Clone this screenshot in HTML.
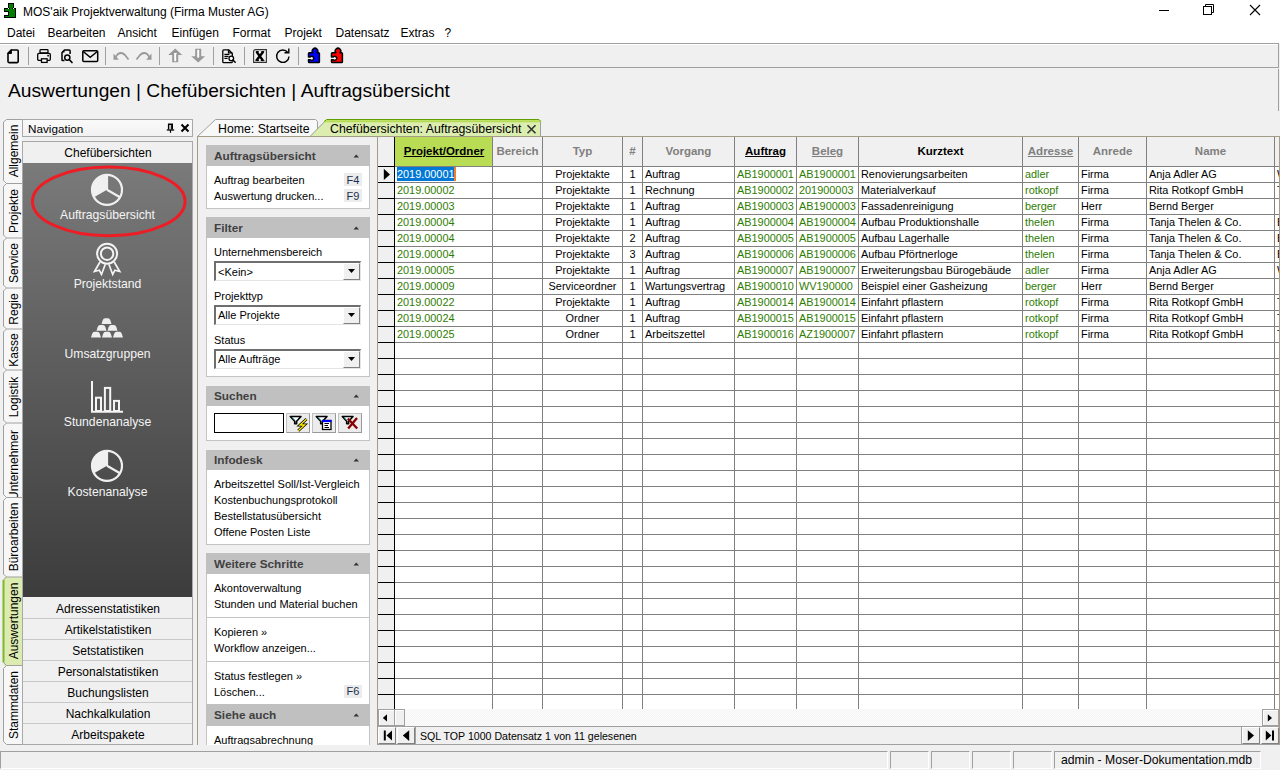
<!DOCTYPE html><html><head><meta charset='utf-8'><style>
html,body{margin:0;padding:0}
body{width:1280px;height:770px;position:relative;overflow:hidden;background:#f0f0f0;font-family:'Liberation Sans', sans-serif;}
div{box-sizing:border-box}
svg{position:absolute;overflow:visible}
</style></head><body><div style='position:absolute;left:0px;top:0px;width:1280px;height:43px;background:#fff'></div><div style='position:absolute;left:23px;top:12px;height:0;line-height:0;font-size:12px;color:#000;font-weight:normal;white-space:nowrap;'>MOS'aik Projektverwaltung (Firma Muster AG)</div><div style='position:absolute;left:1159px;top:10px;width:10px;height:1px;background:#000'></div><svg style='left:1203px;top:4px' width='12' height='12'><path d='M2.5 2.5V0.5H10.5V8.5H8.5' fill='none' stroke='#000'/><rect x='0.5' y='2.5' width='8' height='8' fill='none' stroke='#000'/></svg><svg style='left:1249px;top:4px' width='12' height='12'><path d='M1 1L11 11M11 1L1 11' stroke='#000' stroke-width='1.1'/></svg><svg style='left:0;top:0' width='20' height='20' shape-rendering='crispEdges'><rect x='4' y='8' width='12' height='10' fill='#000'/><rect x='8' y='3' width='6' height='5' fill='#000'/><rect x='9' y='2.6' width='4' height='1' fill='#000'/><rect x='5' y='9' width='10' height='8' fill='#008000'/><rect x='9' y='4' width='4' height='4' fill='#008000'/><rect x='10' y='7' width='2' height='2' fill='#008000'/><rect x='8' y='8' width='1' height='1' fill='#f0f0f0'/><rect x='13' y='8' width='1' height='1' fill='#f0f0f0'/><rect x='4' y='12' width='5' height='3' fill='#000'/><rect x='4' y='12' width='4' height='2.4' fill='#fff'/><rect x='4' y='11' width='5' height='1' fill='#000'/><rect x='4' y='15' width='5' height='1' fill='#000'/><rect x='8' y='11' width='1' height='5' fill='#000'/><rect x='5' y='12' width='3' height='3' fill='#fff'/><rect x='4' y='12.2' width='1' height='2.6' fill='#fff'/></svg><div style='position:absolute;left:7.0px;top:33px;height:0;line-height:0;font-size:12px;color:#000;font-weight:normal;white-space:nowrap;'>Datei</div><div style='position:absolute;left:47.5px;top:33px;height:0;line-height:0;font-size:12px;color:#000;font-weight:normal;white-space:nowrap;'>Bearbeiten</div><div style='position:absolute;left:117.5px;top:33px;height:0;line-height:0;font-size:12px;color:#000;font-weight:normal;white-space:nowrap;'>Ansicht</div><div style='position:absolute;left:171.5px;top:33px;height:0;line-height:0;font-size:12px;color:#000;font-weight:normal;white-space:nowrap;'>Einfügen</div><div style='position:absolute;left:232.5px;top:33px;height:0;line-height:0;font-size:12px;color:#000;font-weight:normal;white-space:nowrap;'>Format</div><div style='position:absolute;left:284.5px;top:33px;height:0;line-height:0;font-size:12px;color:#000;font-weight:normal;white-space:nowrap;'>Projekt</div><div style='position:absolute;left:335.5px;top:33px;height:0;line-height:0;font-size:12px;color:#000;font-weight:normal;white-space:nowrap;'>Datensatz</div><div style='position:absolute;left:400.5px;top:33px;height:0;line-height:0;font-size:12px;color:#000;font-weight:normal;white-space:nowrap;'>Extras</div><div style='position:absolute;left:444.5px;top:33px;height:0;line-height:0;font-size:12px;color:#000;font-weight:normal;white-space:nowrap;'>?</div><div style='position:absolute;left:0px;top:43px;width:1279px;height:25px;border:1px solid #a0a0a0;border-left:none;background:#f0f0f0'></div><div style='position:absolute;left:28px;top:47px;width:1px;height:18px;background:#a0a0a0'></div><div style='position:absolute;left:105px;top:47px;width:1px;height:18px;background:#a0a0a0'></div><div style='position:absolute;left:159px;top:47px;width:1px;height:18px;background:#a0a0a0'></div><div style='position:absolute;left:213px;top:47px;width:1px;height:18px;background:#a0a0a0'></div><div style='position:absolute;left:244px;top:47px;width:1px;height:18px;background:#a0a0a0'></div><div style='position:absolute;left:298px;top:47px;width:1px;height:18px;background:#a0a0a0'></div><div style='position:absolute;left:0px;top:44px;width:1278px;height:1px;background:#fff'></div><svg style='left:7px;top:49px' width='13' height='15'><path d='M1 4.3L4.3 1H10.2Q11.2 1 11.2 2V12.6Q11.2 13.6 10.2 13.6H2Q1 13.6 1 12.6Z' fill='none' stroke='#000' stroke-width='1.6' stroke-linejoin='round'/><path d='M1 4.3L4.3 1V4.3Z' fill='#000' stroke='#000' stroke-width='1.2' stroke-linejoin='round'/></svg><svg style='left:37px;top:49px' width='15' height='15'><rect x='3' y='0.7' width='8' height='3.2' rx='0.7' fill='none' stroke='#000' stroke-width='1.3'/><rect x='0.7' y='4.4' width='12.6' height='6.9' rx='1.1' fill='#f0f0f0' stroke='#000' stroke-width='1.3'/><rect x='4.5' y='9.8' width='5.6' height='3.6' fill='#fff' stroke='#000' stroke-width='1.3'/><circle cx='11.1' cy='6.7' r='0.9' fill='#000'/></svg><svg style='left:61px;top:49px' width='13' height='15'><path d='M3.5 11.5H1.8Q1 11.5 1 10.7V3.5L3.5 1H8.3Q9.1 1 9.1 1.8V5' fill='none' stroke='#000' stroke-width='1.5' stroke-linejoin='round'/><path d='M1 3.5L3.5 1V3.5Z' fill='#000'/><circle cx='6.3' cy='8.6' r='2.6' fill='#f0f0f0' stroke='#000' stroke-width='1.5'/><path d='M8.2 10.5L11 13.5' stroke='#000' stroke-width='1.7' stroke-linecap='round'/></svg><svg style='left:82px;top:50px' width='17' height='13'><rect x='0.8' y='0.8' width='14.9' height='10.6' rx='1' fill='none' stroke='#000' stroke-width='1.5'/><path d='M1.2 1.5L8.2 7.3L15.3 1.5' fill='none' stroke='#000' stroke-width='1.5'/></svg><svg style='left:113px;top:51px' width='17' height='10'><path d='M15.5 8.5L12 4Q8.5 0.5 5 3L2.5 6' fill='none' stroke='#999' stroke-width='1.8'/><path d='M0.5 2.5V8.8H5.8Z' fill='#999'/></svg><svg style='left:136px;top:51px' width='17' height='10'><g transform='translate(16,0) scale(-1,1)'><path d='M15.5 8.5L12 4Q8.5 0.5 5 3L2.5 6' fill='none' stroke='#999' stroke-width='1.8'/><path d='M0.5 2.5V8.8H5.8Z' fill='#999'/></g></svg><svg style='left:168px;top:48px' width='15' height='15'><path d='M7.2 0.6L14.2 6.9H10.2V14.3H4.2V6.9H0.2Z' fill='#999'/><path d='M6.2 5.5V13.2H8.2V5.5Z' fill='#fff'/><path d='M6.2 5.5H8.7' stroke='#fff'/></svg><svg style='left:191px;top:48px' width='15' height='15'><path d='M7.2 14.6L14.2 8.2H10.2V0.8H4.2V8.2H0.2Z' fill='#999'/><path d='M6.2 1.8V9.6H8.2V1.8Z' fill='#fff'/></svg><svg style='left:222px;top:49px' width='15' height='15'><path d='M10.3 8V4.5L6.6 0.8H1.8Q0.8 0.8 0.8 1.8V12.7Q0.8 13.6 1.8 13.6H9.4Q10.3 13.6 10.3 12.7V12.2' fill='none' stroke='#000' stroke-width='1.3' stroke-linejoin='round'/><path d='M6.5 0.8V3.8H10.3' fill='none' stroke='#000' stroke-width='1.3'/><path d='M2.4 5.4H7.4M2.4 7.4H6.6M2.4 9.4H5.6' stroke='#000' stroke-width='1.1'/><circle cx='9.3' cy='9.4' r='2.3' fill='#fff' stroke='#000' stroke-width='1.3'/><path d='M10.9 11.1L13.2 13.3' stroke='#000' stroke-width='1.5' stroke-linecap='round'/></svg><svg style='left:253px;top:49px' width='15' height='15'><path d='M0.6 13.4V2.6Q0.6 0.6 2.6 0.6H13.4V13.4Z' fill='none' stroke='#333' stroke-width='1.1'/><path d='M3.6 2.8L10 11.6M10.2 2.8L3.4 11.6' stroke='#000' stroke-width='2.4'/><path d='M2.8 2.6H5.8M8.3 2.6H11.2M2.4 11.6H6M7.8 11.6H11.4' stroke='#000' stroke-width='1'/></svg><svg style='left:275px;top:48px' width='16' height='16'><path d='M12.8 4.5A6.2 6.2 0 1 0 14 8.5' fill='none' stroke='#000' stroke-width='1.4'/><path d='M9.5 4.8H13.8V0.6' fill='none' stroke='#000' stroke-width='1.4'/></svg><svg style='left:308px;top:48px' width='14' height='16'><circle cx='3.3' cy='10.3' r='1.7' fill='#fff'/><path d='M1.3 4.8H4.9A2.75 2.75 0 1 1 9.1 4.8H10.6Q11.4 4.8 11.4 5.6V13.8Q11.4 14.6 10.6 14.6H1.3Q0.5 14.6 0.5 13.8V11.7H2.3A2 2 0 1 0 2.3 8.9H0.5V5.6Q0.5 4.8 1.3 4.8Z' fill='#0000ff' stroke='#000' stroke-width='1.5' stroke-linejoin='round'/></svg><svg style='left:331px;top:48px' width='14' height='16'><circle cx='3.3' cy='10.3' r='1.7' fill='#fff'/><path d='M1.3 4.8H4.9A2.75 2.75 0 1 1 9.1 4.8H10.6Q11.4 4.8 11.4 5.6V13.8Q11.4 14.6 10.6 14.6H1.3Q0.5 14.6 0.5 13.8V11.7H2.3A2 2 0 1 0 2.3 8.9H0.5V5.6Q0.5 4.8 1.3 4.8Z' fill='#ff0000' stroke='#000' stroke-width='1.5' stroke-linejoin='round'/></svg><div style='position:absolute;left:8px;top:91px;height:0;line-height:0;font-size:19.2px;color:#000;font-weight:normal;white-space:nowrap;'>Auswertungen | Chefübersichten | Auftragsübersicht</div><div style='position:absolute;left:1278px;top:69px;width:1px;height:42px;background:#a0a0a0'></div><div style='position:absolute;left:4px;top:119px;width:18px;height:64.5px;background:#f7f7f7;overflow:hidden'><div style='position:absolute;left:-40px;top:32.25px;width:98px;height:0;transform:rotate(-90deg);transform-origin:49px 0;text-align:center;line-height:0;font-size:12px;color:#000;white-space:nowrap'><span style='position:relative;top:1px'>Allgemein</span></div></div><div style='position:absolute;left:4px;top:183.5px;width:18px;height:54.5px;background:#f7f7f7;overflow:hidden'><div style='position:absolute;left:-40px;top:27.25px;width:98px;height:0;transform:rotate(-90deg);transform-origin:49px 0;text-align:center;line-height:0;font-size:12px;color:#000;white-space:nowrap'><span style='position:relative;top:1px'>Projekte</span></div></div><div style='position:absolute;left:4px;top:238px;width:18px;height:50px;background:#f7f7f7;overflow:hidden'><div style='position:absolute;left:-40px;top:25.0px;width:98px;height:0;transform:rotate(-90deg);transform-origin:49px 0;text-align:center;line-height:0;font-size:12px;color:#000;white-space:nowrap'><span style='position:relative;top:1px'>Service</span></div></div><div style='position:absolute;left:4px;top:288px;width:18px;height:41px;background:#f7f7f7;overflow:hidden'><div style='position:absolute;left:-40px;top:20.5px;width:98px;height:0;transform:rotate(-90deg);transform-origin:49px 0;text-align:center;line-height:0;font-size:12px;color:#000;white-space:nowrap'><span style='position:relative;top:1px'>Regie</span></div></div><div style='position:absolute;left:4px;top:329px;width:18px;height:41px;background:#f7f7f7;overflow:hidden'><div style='position:absolute;left:-40px;top:20.5px;width:98px;height:0;transform:rotate(-90deg);transform-origin:49px 0;text-align:center;line-height:0;font-size:12px;color:#000;white-space:nowrap'><span style='position:relative;top:1px'>Kasse</span></div></div><div style='position:absolute;left:4px;top:370px;width:18px;height:53px;background:#f7f7f7;overflow:hidden'><div style='position:absolute;left:-40px;top:26.5px;width:98px;height:0;transform:rotate(-90deg);transform-origin:49px 0;text-align:center;line-height:0;font-size:12px;color:#000;white-space:nowrap'><span style='position:relative;top:1px'>Logistik</span></div></div><div style='position:absolute;left:4px;top:423px;width:18px;height:74.5px;background:#f7f7f7;overflow:hidden'><div style='position:absolute;left:-40px;top:42.25px;width:98px;height:0;transform:rotate(-90deg);transform-origin:49px 0;text-align:center;line-height:0;font-size:12px;color:#000;white-space:nowrap'><span style='position:relative;top:1px'>Unternehmer</span></div></div><div style='position:absolute;left:4px;top:497.5px;width:18px;height:79.5px;background:#f7f7f7;overflow:hidden'><div style='position:absolute;left:-40px;top:39.75px;width:98px;height:0;transform:rotate(-90deg);transform-origin:49px 0;text-align:center;line-height:0;font-size:12px;color:#000;white-space:nowrap'><span style='position:relative;top:1px'>Büroarbeiten</span></div></div><div style='position:absolute;left:4px;top:577px;width:18px;height:88.5px;background:#dcecb0;overflow:hidden'><div style='position:absolute;left:-40px;top:44.25px;width:98px;height:0;transform:rotate(-90deg);transform-origin:49px 0;text-align:center;line-height:0;font-size:12px;color:#000;white-space:nowrap'><span style='position:relative;top:1px'>Auswertungen</span></div></div><div style='position:absolute;left:4px;top:665.5px;width:18px;height:79.0px;background:#f7f7f7;overflow:hidden'><div style='position:absolute;left:-40px;top:39.5px;width:98px;height:0;transform:rotate(-90deg);transform-origin:49px 0;text-align:center;line-height:0;font-size:12px;color:#000;white-space:nowrap'><span style='position:relative;top:1px'>Stammdaten</span></div></div><svg style='left:0;top:110px' width='30' height='640'><path d='M3.5 12V70.5' stroke='#a0a0a0' stroke-width='1' fill='none'/><path d='M3.5 76.5V125' stroke='#a0a0a0' stroke-width='1' fill='none'/><path d='M3.5 70.5L6.5 73.5L3.5 76.5' stroke='#a0a0a0' fill='none'/><path d='M6.5 73.5H22' stroke='#a0a0a0' fill='none'/><path d='M3.5 131V175' stroke='#a0a0a0' stroke-width='1' fill='none'/><path d='M3.5 125L6.5 128L3.5 131' stroke='#a0a0a0' fill='none'/><path d='M6.5 128H22' stroke='#a0a0a0' fill='none'/><path d='M3.5 181V216' stroke='#a0a0a0' stroke-width='1' fill='none'/><path d='M3.5 175L6.5 178L3.5 181' stroke='#a0a0a0' fill='none'/><path d='M6.5 178H22' stroke='#a0a0a0' fill='none'/><path d='M3.5 222V257' stroke='#a0a0a0' stroke-width='1' fill='none'/><path d='M3.5 216L6.5 219L3.5 222' stroke='#a0a0a0' fill='none'/><path d='M6.5 219H22' stroke='#a0a0a0' fill='none'/><path d='M3.5 263V310' stroke='#a0a0a0' stroke-width='1' fill='none'/><path d='M3.5 257L6.5 260L3.5 263' stroke='#a0a0a0' fill='none'/><path d='M6.5 260H22' stroke='#a0a0a0' fill='none'/><path d='M3.5 316V384.5' stroke='#a0a0a0' stroke-width='1' fill='none'/><path d='M3.5 310L6.5 313L3.5 316' stroke='#a0a0a0' fill='none'/><path d='M6.5 313H22' stroke='#a0a0a0' fill='none'/><path d='M3.5 390.5V464' stroke='#a0a0a0' stroke-width='1' fill='none'/><path d='M3.5 384.5L6.5 387.5L3.5 390.5' stroke='#a0a0a0' fill='none'/><path d='M6.5 387.5H22' stroke='#a0a0a0' fill='none'/><path d='M3.5 470V552.5' stroke='#7cb82a' stroke-width='2' fill='none'/><path d='M3.5 464L6.5 467L3.5 470' stroke='#a0a0a0' fill='none'/><path d='M6.5 467H22' stroke='#a0a0a0' fill='none'/><path d='M3.5 558.5V631.5' stroke='#a0a0a0' stroke-width='1' fill='none'/><path d='M3.5 552.5L6.5 555.5L3.5 558.5' stroke='#a0a0a0' fill='none'/><path d='M6.5 555.5H22' stroke='#a0a0a0' fill='none'/><path d='M3.5 12L6.5 9.5H22' stroke='#a0a0a0' fill='none'/><path d='M3.5 631.5L6.5 634.5H22' stroke='#a0a0a0' fill='none'/></svg><div style='position:absolute;left:22px;top:119px;width:171px;height:18px;border:1px solid #a8a8a8;background:linear-gradient(#fafafa,#f2f2f2)'></div><div style='position:absolute;left:28px;top:128.5px;height:0;line-height:0;font-size:11.7px;color:#000;font-weight:normal;white-space:nowrap;'>Navigation</div><svg style='left:166px;top:122.5px' width='10' height='12'><path d='M2.6 1.2V6.5M6.3 1.2V6.5M2 1.3H7' stroke='#000' stroke-width='1.4' fill='none'/><path d='M5.3 1V6.5' stroke='#000' stroke-width='1'/><path d='M0.8 7H8.2' stroke='#000' stroke-width='1.3'/><path d='M4.5 7V9.8' stroke='#000' stroke-width='1.2'/></svg><svg style='left:180px;top:123px' width='10' height='10'><path d='M1.5 1.5L8.5 8.5M8.5 1.5L1.5 8.5' stroke='#000' stroke-width='2'/></svg><div style='position:absolute;left:22px;top:141px;width:171px;height:23px;border:1px solid #a8a8a8;border-bottom:none;background:#f0f0f0'></div><div style='position:absolute;left:-192px;width:600px;text-align:center;top:153px;height:0;line-height:0;font-size:12px;color:#000;font-weight:normal;white-space:nowrap;'>Chefübersichten</div><div style='position:absolute;left:22px;top:163px;width:171px;height:434px;background:linear-gradient(#7a7a7a,#3c3c3c);border-left:1px solid #a8a8a8;border-right:1px solid #a8a8a8'></div><div style='position:absolute;left:22px;top:596.5px;width:171px;height:148px;border:1px solid #a8a8a8;border-top:none;background:#f0f0f0'></div><div style='position:absolute;left:-192px;width:600px;text-align:center;top:608.5px;height:0;line-height:0;font-size:12px;color:#000;font-weight:normal;white-space:nowrap;'>Adressenstatistiken</div><div style='position:absolute;left:23px;top:617.5px;width:169px;height:1px;background:#c8c8c8'></div><div style='position:absolute;left:-192px;width:600px;text-align:center;top:629.5px;height:0;line-height:0;font-size:12px;color:#000;font-weight:normal;white-space:nowrap;'>Artikelstatistiken</div><div style='position:absolute;left:23px;top:638.5px;width:169px;height:1px;background:#c8c8c8'></div><div style='position:absolute;left:-192px;width:600px;text-align:center;top:650.5px;height:0;line-height:0;font-size:12px;color:#000;font-weight:normal;white-space:nowrap;'>Setstatistiken</div><div style='position:absolute;left:23px;top:659.5px;width:169px;height:1px;background:#c8c8c8'></div><div style='position:absolute;left:-192px;width:600px;text-align:center;top:671.5px;height:0;line-height:0;font-size:12px;color:#000;font-weight:normal;white-space:nowrap;'>Personalstatistiken</div><div style='position:absolute;left:23px;top:680.5px;width:169px;height:1px;background:#c8c8c8'></div><div style='position:absolute;left:-192px;width:600px;text-align:center;top:692.5px;height:0;line-height:0;font-size:12px;color:#000;font-weight:normal;white-space:nowrap;'>Buchungslisten</div><div style='position:absolute;left:23px;top:701.5px;width:169px;height:1px;background:#c8c8c8'></div><div style='position:absolute;left:-192px;width:600px;text-align:center;top:713.5px;height:0;line-height:0;font-size:12px;color:#000;font-weight:normal;white-space:nowrap;'>Nachkalkulation</div><div style='position:absolute;left:23px;top:722.5px;width:169px;height:1px;background:#c8c8c8'></div><div style='position:absolute;left:-192px;width:600px;text-align:center;top:734.5px;height:0;line-height:0;font-size:12px;color:#000;font-weight:normal;white-space:nowrap;'>Arbeitspakete</div><svg style='left:0;top:0' width='200' height='600'><path d='M107 189.8L107 174.8A15 15 0 0 0 94.01 197.30Z' fill='#f0f0f0'/><circle cx='107' cy='189.8' r='15' fill='none' stroke='#f0f0f0' stroke-width='2.2'/><path d='M107 189.8L119.99 197.30M107 189.8L107 174.8' stroke='#f0f0f0' stroke-width='2.2'/></svg><svg style='left:0;top:0' width='200' height='600'><path d='M107 465.8L107 450.8A15 15 0 0 0 94.01 473.30Z' fill='#f0f0f0'/><circle cx='107' cy='465.8' r='15' fill='none' stroke='#f0f0f0' stroke-width='2.2'/><path d='M107 465.8L119.99 473.30M107 465.8L107 450.8' stroke='#f0f0f0' stroke-width='2.2'/></svg><svg style='left:0;top:0' width='200' height='300'><ellipse cx='108.75' cy='201.4' rx='76.3' ry='34.4' fill='none' stroke='#ee1c25' stroke-width='3'/></svg><svg style='left:0;top:0' width='200' height='300'><circle cx='107.1' cy='253.7' r='10' fill='none' stroke='#f4f4f4' stroke-width='2'/><circle cx='107.1' cy='253.7' r='6.2' fill='none' stroke='#f4f4f4' stroke-width='2'/><path d='M100 262L94.5 271.5L99.3 270.2L101.5 274.5L105.3 264.3' fill='none' stroke='#f4f4f4' stroke-width='1.7' stroke-linejoin='miter'/><path d='M114.2 262L119.7 271.5L114.9 270.2L112.7 274.5L108.9 264.3' fill='none' stroke='#f4f4f4' stroke-width='1.7' stroke-linejoin='miter'/></svg><svg style='left:0;top:0' width='200' height='400'><path d='M101.5 323.9L102.6 320.4Q103.3 318.2 105.1 318.2H107.9Q109.7 318.2 110.4 320.4L111.5 323.9Z' fill='#eeeeee'/><path d='M96.5 330.7L97.6 327.2Q98.3 325 100.1 325H102.9Q104.7 325 105.4 327.2L106.5 330.7Z' fill='#eeeeee'/><path d='M107.5 330.7L108.6 327.2Q109.3 325 111.1 325H113.9Q115.7 325 116.4 327.2L117.5 330.7Z' fill='#eeeeee'/><path d='M91 337.5L92.1 334.0Q92.8 331.8 94.6 331.8H97.4Q99.2 331.8 99.9 334.0L101 337.5Z' fill='#eeeeee'/><path d='M102 337.5L103.1 334.0Q103.8 331.8 105.6 331.8H108.4Q110.2 331.8 110.9 334.0L112 337.5Z' fill='#eeeeee'/><path d='M113 337.5L114.1 334.0Q114.8 331.8 116.6 331.8H119.4Q121.2 331.8 121.9 334.0L123 337.5Z' fill='#eeeeee'/></svg><svg style='left:0;top:0' width='200' height='450'><path d='M92 381V411.8H123' fill='none' stroke='#f4f4f4' stroke-width='2'/><rect x='96' y='397.7' width='5' height='13.3' fill='none' stroke='#f4f4f4' stroke-width='2'/><rect x='104.9' y='387.9' width='5.3' height='23.1' fill='none' stroke='#f4f4f4' stroke-width='2'/><rect x='114' y='400.9' width='5' height='10.1' fill='none' stroke='#f4f4f4' stroke-width='2'/></svg><div style='position:absolute;left:-192.5px;width:600px;text-align:center;top:215px;height:0;line-height:0;font-size:12.2px;color:#f4f4f4;font-weight:normal;white-space:nowrap;'>Auftragsübersicht</div><div style='position:absolute;left:-192.5px;width:600px;text-align:center;top:284px;height:0;line-height:0;font-size:12.2px;color:#f4f4f4;font-weight:normal;white-space:nowrap;'>Projektstand</div><div style='position:absolute;left:-192.5px;width:600px;text-align:center;top:353.8px;height:0;line-height:0;font-size:12.2px;color:#f4f4f4;font-weight:normal;white-space:nowrap;'>Umsatzgruppen</div><div style='position:absolute;left:-192.5px;width:600px;text-align:center;top:422.4px;height:0;line-height:0;font-size:12.2px;color:#f4f4f4;font-weight:normal;white-space:nowrap;'>Stundenanalyse</div><div style='position:absolute;left:-192.5px;width:600px;text-align:center;top:491.8px;height:0;line-height:0;font-size:12.2px;color:#f4f4f4;font-weight:normal;white-space:nowrap;'>Kostenanalyse</div><svg style='left:0;top:0' width='600' height='140'><path d='M197.5 136.5L215.5 119.5H315.5L317.5 121.5V136.5' fill='#f8f8f8' stroke='#a0a0a0'/><path d='M310 136.5L326.5 119.5H539L541 121.5V136.5Z' fill='#dcedb0'/><path d='M310 136.5L324.8 121.5' stroke='#909090' stroke-width='0.9' fill='none'/><path d='M324 121.2H540.5' stroke='#b4dc50' stroke-width='2' fill='none'/><path d='M324.5 121.5L326.5 119.5H539L541 121.5' stroke='#62a000' stroke-width='1' fill='none'/><path d='M540.5 122V136.5' stroke='#a0a0a0' fill='none'/></svg><div style='position:absolute;left:218px;top:129px;height:0;line-height:0;font-size:12.3px;color:#000;font-weight:normal;white-space:nowrap;'>Home: Startseite</div><div style='position:absolute;left:330px;top:129px;height:0;line-height:0;font-size:12.3px;color:#000;font-weight:normal;white-space:nowrap;'>Chefübersichten: Auftragsübersicht</div><svg style='left:526px;top:124px' width='12' height='11'><path d='M1.5 1.2L9.5 9.2M9.5 1.2L1.5 9.2' stroke='#333' stroke-width='1.6'/></svg><div style='position:absolute;left:197px;top:136px;width:1px;height:609px;background:#a49c88'></div><div style='position:absolute;left:197px;top:136px;width:180px;height:1px;background:#a49c88'></div><div style='position:absolute;left:206px;top:145px;width:164px;height:21px;background:#c0c0c0'></div><div style='position:absolute;left:214px;top:155.6px;height:0;line-height:0;font-size:11.8px;color:#404040;font-weight:bold;white-space:nowrap;'>Auftragsübersicht</div><svg style='left:353px;top:153.5px' width='7' height='4'><path d='M0.5 3.5L3.3 0.5L6 3.5Z' fill='#333'/></svg><div style='position:absolute;left:206px;top:166px;width:164px;height:43px;background:#fff;border:1px solid #c4c4c4;border-top:none'></div><div style='position:absolute;left:214px;top:179.8px;height:0;line-height:0;font-size:11px;color:#000;font-weight:normal;white-space:nowrap;'>Auftrag bearbeiten</div><div style='position:absolute;left:214px;top:195.8px;height:0;line-height:0;font-size:11px;color:#000;font-weight:normal;white-space:nowrap;'>Auswertung drucken...</div><div style='position:absolute;left:344px;top:173px;width:18px;height:13px;background:#ececec'></div><div style='position:absolute;left:346.5px;top:179.5px;height:0;line-height:0;font-size:11px;color:#1a3050;font-weight:normal;white-space:nowrap;'>F4</div><div style='position:absolute;left:344px;top:189px;width:18px;height:13px;background:#ececec'></div><div style='position:absolute;left:346.5px;top:195.5px;height:0;line-height:0;font-size:11px;color:#1a3050;font-weight:normal;white-space:nowrap;'>F9</div><div style='position:absolute;left:206px;top:217px;width:164px;height:21px;background:#c0c0c0'></div><div style='position:absolute;left:214px;top:227.6px;height:0;line-height:0;font-size:11.8px;color:#404040;font-weight:bold;white-space:nowrap;'>Filter</div><svg style='left:353px;top:225.5px' width='7' height='4'><path d='M0.5 3.5L3.3 0.5L6 3.5Z' fill='#333'/></svg><div style='position:absolute;left:206px;top:238px;width:164px;height:138.5px;background:#fff;border:1px solid #c4c4c4;border-top:none'></div><div style='position:absolute;left:214px;top:252px;height:0;line-height:0;font-size:11px;color:#000;font-weight:normal;white-space:nowrap;'>Unternehmensbereich</div><div style='position:absolute;left:214px;top:261px;width:147px;height:20px;background:#fff;border-top:2px solid #6e6e6e;border-left:2px solid #6e6e6e;border-bottom:1px solid #e4e4e4;border-right:1px solid #e4e4e4'></div><div style='position:absolute;left:218px;top:271.5px;height:0;line-height:0;font-size:11px;color:#000;font-weight:normal;white-space:nowrap;'>&lt;Kein&gt;</div><div style='position:absolute;left:343px;top:263px;width:17px;height:17px;background:#f0f0f0;border-top:1px solid #fff;border-left:1px solid #fff;border-right:1px solid #808080;border-bottom:1px solid #808080'></div><svg style='left:348px;top:269px' width='8' height='5'><path d='M0 0H7L3.5 4Z' fill='#000'/></svg><div style='position:absolute;left:214px;top:295.5px;height:0;line-height:0;font-size:11px;color:#000;font-weight:normal;white-space:nowrap;'>Projekttyp</div><div style='position:absolute;left:214px;top:304.5px;width:147px;height:20px;background:#fff;border-top:2px solid #6e6e6e;border-left:2px solid #6e6e6e;border-bottom:1px solid #e4e4e4;border-right:1px solid #e4e4e4'></div><div style='position:absolute;left:218px;top:315.0px;height:0;line-height:0;font-size:11px;color:#000;font-weight:normal;white-space:nowrap;'>Alle Projekte</div><div style='position:absolute;left:343px;top:306.5px;width:17px;height:17px;background:#f0f0f0;border-top:1px solid #fff;border-left:1px solid #fff;border-right:1px solid #808080;border-bottom:1px solid #808080'></div><svg style='left:348px;top:312.5px' width='8' height='5'><path d='M0 0H7L3.5 4Z' fill='#000'/></svg><div style='position:absolute;left:214px;top:339.6px;height:0;line-height:0;font-size:11px;color:#000;font-weight:normal;white-space:nowrap;'>Status</div><div style='position:absolute;left:214px;top:348.5px;width:147px;height:20px;background:#fff;border-top:2px solid #6e6e6e;border-left:2px solid #6e6e6e;border-bottom:1px solid #e4e4e4;border-right:1px solid #e4e4e4'></div><div style='position:absolute;left:218px;top:359.0px;height:0;line-height:0;font-size:11px;color:#000;font-weight:normal;white-space:nowrap;'>Alle Aufträge</div><div style='position:absolute;left:343px;top:350.5px;width:17px;height:17px;background:#f0f0f0;border-top:1px solid #fff;border-left:1px solid #fff;border-right:1px solid #808080;border-bottom:1px solid #808080'></div><svg style='left:348px;top:356.5px' width='8' height='5'><path d='M0 0H7L3.5 4Z' fill='#000'/></svg><div style='position:absolute;left:206px;top:385.5px;width:164px;height:20.5px;background:#c0c0c0'></div><div style='position:absolute;left:214px;top:396.1px;height:0;line-height:0;font-size:11.8px;color:#404040;font-weight:bold;white-space:nowrap;'>Suchen</div><svg style='left:353px;top:394.0px' width='7' height='4'><path d='M0.5 3.5L3.3 0.5L6 3.5Z' fill='#333'/></svg><div style='position:absolute;left:206px;top:406px;width:164px;height:34.5px;background:#fff;border:1px solid #c4c4c4;border-top:none'></div><div style='position:absolute;left:214px;top:413px;width:70px;height:20px;background:#fff;border:1.5px solid #000'></div><div style='position:absolute;left:286px;top:413px;width:24px;height:20px;background:#ececec;border:1px solid #c0c0c0;border-right-color:#999;border-bottom-color:#999'></div><div style='position:absolute;left:312px;top:413px;width:24px;height:20px;background:#ececec;border:1px solid #c0c0c0;border-right-color:#999;border-bottom-color:#999'></div><div style='position:absolute;left:338px;top:413px;width:24px;height:20px;background:#ececec;border:1px solid #c0c0c0;border-right-color:#999;border-bottom-color:#999'></div><svg style='left:286px;top:413px' width='24' height='20'><path d='M4.3 3.5H15L10.6 8.3V10.8H8.7V8.3Z' fill='#fff' stroke='#000' stroke-width='1.6' stroke-linejoin='round'/><path d='M6.5 4.8L9 7.5' stroke='#20b0b0' stroke-width='1'/><path d='M20.5 6L14 12H18.5L12.2 17.8' fill='none' stroke='#000' stroke-width='2.8' stroke-linejoin='miter'/><path d='M20.5 6L14 12H18.5L12.2 17.8' fill='none' stroke='#ffee00' stroke-width='1.3' stroke-linejoin='miter'/></svg><svg style='left:312px;top:413px' width='24' height='20'><path d='M4.3 3.5H15L10.6 8.3V10.8H8.7V8.3Z' fill='#fff' stroke='#000' stroke-width='1.6' stroke-linejoin='round'/><path d='M6.5 4.8L9 7.5' stroke='#20b0b0' stroke-width='1'/><rect x='10.5' y='7.5' width='8.5' height='9' fill='#fff' stroke='#000' stroke-width='1.3'/><rect x='10.1' y='6.9' width='9.4' height='2.2' fill='#0000ff'/><path d='M12.5 10.5H17M12.5 12.5H16M12.5 14.5H17' stroke='#000' stroke-width='1'/></svg><svg style='left:338px;top:413px' width='24' height='20'><path d='M4.3 3.5H15L10.6 8.3V10.8H8.7V8.3Z' fill='#fff' stroke='#000' stroke-width='1.6' stroke-linejoin='round'/><path d='M6.5 4.8L9 7.5' stroke='#20b0b0' stroke-width='1'/><path d='M9.8 5.5L19.2 15.5M19 5L10.2 15.5' stroke='#880000' stroke-width='2.3'/></svg><div style='position:absolute;left:206px;top:449.5px;width:164px;height:20.0px;background:#c0c0c0'></div><div style='position:absolute;left:214px;top:460.1px;height:0;line-height:0;font-size:11.8px;color:#404040;font-weight:bold;white-space:nowrap;'>Infodesk</div><svg style='left:353px;top:458.0px' width='7' height='4'><path d='M0.5 3.5L3.3 0.5L6 3.5Z' fill='#333'/></svg><div style='position:absolute;left:206px;top:469.5px;width:164px;height:75.5px;background:#fff;border:1px solid #c4c4c4;border-top:none'></div><div style='position:absolute;left:214px;top:484px;height:0;line-height:0;font-size:11px;color:#000;font-weight:normal;white-space:nowrap;'>Arbeitszettel Soll/Ist-Vergleich</div><div style='position:absolute;left:214px;top:500px;height:0;line-height:0;font-size:11px;color:#000;font-weight:normal;white-space:nowrap;'>Kostenbuchungsprotokoll</div><div style='position:absolute;left:214px;top:516px;height:0;line-height:0;font-size:11px;color:#000;font-weight:normal;white-space:nowrap;'>Bestellstatusübersicht</div><div style='position:absolute;left:214px;top:532px;height:0;line-height:0;font-size:11px;color:#000;font-weight:normal;white-space:nowrap;'>Offene Posten Liste</div><div style='position:absolute;left:206px;top:553px;width:164px;height:21px;background:#c0c0c0'></div><div style='position:absolute;left:214px;top:563.6px;height:0;line-height:0;font-size:11.8px;color:#404040;font-weight:bold;white-space:nowrap;'>Weitere Schritte</div><svg style='left:353px;top:561.5px' width='7' height='4'><path d='M0.5 3.5L3.3 0.5L6 3.5Z' fill='#333'/></svg><div style='position:absolute;left:206px;top:574px;width:164px;height:130.5px;background:#fff;border:1px solid #c4c4c4;border-top:none'></div><div style='position:absolute;left:214px;top:588.4px;height:0;line-height:0;font-size:11px;color:#000;font-weight:normal;white-space:nowrap;'>Akontoverwaltung</div><div style='position:absolute;left:214px;top:604.4px;height:0;line-height:0;font-size:11px;color:#000;font-weight:normal;white-space:nowrap;'>Stunden und Material buchen</div><div style='position:absolute;left:207px;top:616.5px;width:162px;height:1px;background:#c4c4c4'></div><div style='position:absolute;left:214px;top:631.5px;height:0;line-height:0;font-size:11px;color:#000;font-weight:normal;white-space:nowrap;'>Kopieren »</div><div style='position:absolute;left:214px;top:647.5px;height:0;line-height:0;font-size:11px;color:#000;font-weight:normal;white-space:nowrap;'>Workflow anzeigen...</div><div style='position:absolute;left:207px;top:661px;width:162px;height:1px;background:#c4c4c4'></div><div style='position:absolute;left:214px;top:675.5px;height:0;line-height:0;font-size:11px;color:#000;font-weight:normal;white-space:nowrap;'>Status festlegen »</div><div style='position:absolute;left:214px;top:691.5px;height:0;line-height:0;font-size:11px;color:#000;font-weight:normal;white-space:nowrap;'>Löschen...</div><div style='position:absolute;left:344px;top:684.5px;width:18px;height:13px;background:#ececec'></div><div style='position:absolute;left:346.5px;top:691.0px;height:0;line-height:0;font-size:11px;color:#1a3050;font-weight:normal;white-space:nowrap;'>F6</div><div style='position:absolute;left:206px;top:704px;width:164px;height:22px;background:#c0c0c0'></div><div style='position:absolute;left:214px;top:714.6px;height:0;line-height:0;font-size:11.8px;color:#404040;font-weight:bold;white-space:nowrap;'>Siehe auch</div><svg style='left:353px;top:712.5px' width='7' height='4'><path d='M0.5 3.5L3.3 0.5L6 3.5Z' fill='#333'/></svg><div style='position:absolute;left:206px;top:726px;width:164px;height:19px;background:#fff;border-left:1px solid #c4c4c4;border-right:1px solid #c4c4c4;overflow:hidden'></div><div style='position:absolute;left:206px;top:726px;width:164px;height:19px;overflow:hidden'><div style='position:absolute;left:8px;top:13.5px;height:0;line-height:0;font-size:11px;color:#000;font-weight:normal;white-space:nowrap;'>Auftragsabrechnung</div></div><div style='position:absolute;left:377px;top:136px;width:902px;height:573px;background:#fff'></div><div style='position:absolute;left:377px;top:136px;width:1px;height:609px;background:#a49c88'></div><div style='position:absolute;left:377px;top:136px;width:902px;height:1px;background:#a49c88'></div><div style='position:absolute;left:378px;top:137px;width:901px;height:29px;background:#f0f0f0'></div><div style='position:absolute;left:395px;top:137px;width:97.5px;height:29px;background:#b8dc54'></div><div style='position:absolute;left:378px;top:166px;width:16px;height:543px;background:#f0f0f0'></div><div style='position:absolute;left:378px;top:166px;width:16px;height:1px;background:#000'></div><div style='position:absolute;left:395px;top:166px;width:884px;height:1px;background:#808080'></div><div style='position:absolute;left:378px;top:182px;width:16px;height:1px;background:#000'></div><div style='position:absolute;left:395px;top:182px;width:884px;height:1px;background:#808080'></div><div style='position:absolute;left:378px;top:198px;width:16px;height:1px;background:#000'></div><div style='position:absolute;left:395px;top:198px;width:884px;height:1px;background:#808080'></div><div style='position:absolute;left:378px;top:214px;width:16px;height:1px;background:#000'></div><div style='position:absolute;left:395px;top:214px;width:884px;height:1px;background:#808080'></div><div style='position:absolute;left:378px;top:230px;width:16px;height:1px;background:#000'></div><div style='position:absolute;left:395px;top:230px;width:884px;height:1px;background:#808080'></div><div style='position:absolute;left:378px;top:246px;width:16px;height:1px;background:#000'></div><div style='position:absolute;left:395px;top:246px;width:884px;height:1px;background:#808080'></div><div style='position:absolute;left:378px;top:262px;width:16px;height:1px;background:#000'></div><div style='position:absolute;left:395px;top:262px;width:884px;height:1px;background:#808080'></div><div style='position:absolute;left:378px;top:278px;width:16px;height:1px;background:#000'></div><div style='position:absolute;left:395px;top:278px;width:884px;height:1px;background:#808080'></div><div style='position:absolute;left:378px;top:294px;width:16px;height:1px;background:#000'></div><div style='position:absolute;left:395px;top:294px;width:884px;height:1px;background:#808080'></div><div style='position:absolute;left:378px;top:310px;width:16px;height:1px;background:#000'></div><div style='position:absolute;left:395px;top:310px;width:884px;height:1px;background:#808080'></div><div style='position:absolute;left:378px;top:326px;width:16px;height:1px;background:#000'></div><div style='position:absolute;left:395px;top:326px;width:884px;height:1px;background:#808080'></div><div style='position:absolute;left:378px;top:342px;width:16px;height:1px;background:#000'></div><div style='position:absolute;left:395px;top:342px;width:884px;height:1px;background:#808080'></div><div style='position:absolute;left:378px;top:358px;width:16px;height:1px;background:#000'></div><div style='position:absolute;left:395px;top:358px;width:884px;height:1px;background:#808080'></div><div style='position:absolute;left:378px;top:374px;width:16px;height:1px;background:#000'></div><div style='position:absolute;left:395px;top:374px;width:884px;height:1px;background:#808080'></div><div style='position:absolute;left:378px;top:390px;width:16px;height:1px;background:#000'></div><div style='position:absolute;left:395px;top:390px;width:884px;height:1px;background:#808080'></div><div style='position:absolute;left:378px;top:406px;width:16px;height:1px;background:#000'></div><div style='position:absolute;left:395px;top:406px;width:884px;height:1px;background:#808080'></div><div style='position:absolute;left:378px;top:422px;width:16px;height:1px;background:#000'></div><div style='position:absolute;left:395px;top:422px;width:884px;height:1px;background:#808080'></div><div style='position:absolute;left:378px;top:438px;width:16px;height:1px;background:#000'></div><div style='position:absolute;left:395px;top:438px;width:884px;height:1px;background:#808080'></div><div style='position:absolute;left:378px;top:454px;width:16px;height:1px;background:#000'></div><div style='position:absolute;left:395px;top:454px;width:884px;height:1px;background:#808080'></div><div style='position:absolute;left:378px;top:470px;width:16px;height:1px;background:#000'></div><div style='position:absolute;left:395px;top:470px;width:884px;height:1px;background:#808080'></div><div style='position:absolute;left:378px;top:486px;width:16px;height:1px;background:#000'></div><div style='position:absolute;left:395px;top:486px;width:884px;height:1px;background:#808080'></div><div style='position:absolute;left:378px;top:502px;width:16px;height:1px;background:#000'></div><div style='position:absolute;left:395px;top:502px;width:884px;height:1px;background:#808080'></div><div style='position:absolute;left:378px;top:518px;width:16px;height:1px;background:#000'></div><div style='position:absolute;left:395px;top:518px;width:884px;height:1px;background:#808080'></div><div style='position:absolute;left:378px;top:534px;width:16px;height:1px;background:#000'></div><div style='position:absolute;left:395px;top:534px;width:884px;height:1px;background:#808080'></div><div style='position:absolute;left:378px;top:550px;width:16px;height:1px;background:#000'></div><div style='position:absolute;left:395px;top:550px;width:884px;height:1px;background:#808080'></div><div style='position:absolute;left:378px;top:566px;width:16px;height:1px;background:#000'></div><div style='position:absolute;left:395px;top:566px;width:884px;height:1px;background:#808080'></div><div style='position:absolute;left:378px;top:582px;width:16px;height:1px;background:#000'></div><div style='position:absolute;left:395px;top:582px;width:884px;height:1px;background:#808080'></div><div style='position:absolute;left:378px;top:598px;width:16px;height:1px;background:#000'></div><div style='position:absolute;left:395px;top:598px;width:884px;height:1px;background:#808080'></div><div style='position:absolute;left:378px;top:614px;width:16px;height:1px;background:#000'></div><div style='position:absolute;left:395px;top:614px;width:884px;height:1px;background:#808080'></div><div style='position:absolute;left:378px;top:630px;width:16px;height:1px;background:#000'></div><div style='position:absolute;left:395px;top:630px;width:884px;height:1px;background:#808080'></div><div style='position:absolute;left:378px;top:646px;width:16px;height:1px;background:#000'></div><div style='position:absolute;left:395px;top:646px;width:884px;height:1px;background:#808080'></div><div style='position:absolute;left:378px;top:662px;width:16px;height:1px;background:#000'></div><div style='position:absolute;left:395px;top:662px;width:884px;height:1px;background:#808080'></div><div style='position:absolute;left:378px;top:678px;width:16px;height:1px;background:#000'></div><div style='position:absolute;left:395px;top:678px;width:884px;height:1px;background:#808080'></div><div style='position:absolute;left:378px;top:694px;width:16px;height:1px;background:#000'></div><div style='position:absolute;left:395px;top:694px;width:884px;height:1px;background:#808080'></div><div style='position:absolute;left:394px;top:137px;width:1px;height:572px;background:#000'></div><div style='position:absolute;left:492px;top:137px;width:1px;height:572px;background:#808080'></div><div style='position:absolute;left:542px;top:137px;width:1px;height:572px;background:#808080'></div><div style='position:absolute;left:622px;top:137px;width:1px;height:572px;background:#808080'></div><div style='position:absolute;left:642px;top:137px;width:1px;height:572px;background:#808080'></div><div style='position:absolute;left:734px;top:137px;width:1px;height:572px;background:#808080'></div><div style='position:absolute;left:796px;top:137px;width:1px;height:572px;background:#808080'></div><div style='position:absolute;left:858px;top:137px;width:1px;height:572px;background:#808080'></div><div style='position:absolute;left:1022px;top:137px;width:1px;height:572px;background:#808080'></div><div style='position:absolute;left:1078px;top:137px;width:1px;height:572px;background:#808080'></div><div style='position:absolute;left:1146px;top:137px;width:1px;height:572px;background:#808080'></div><div style='position:absolute;left:1274px;top:137px;width:1px;height:572px;background:#808080'></div><div style='position:absolute;left:144.0px;width:600px;text-align:center;top:150.5px;height:0;line-height:0;font-size:11.5px;color:#000;font-weight:bold;white-space:nowrap;text-decoration:underline;'>Projekt/Ordner</div><div style='position:absolute;left:217.5px;width:600px;text-align:center;top:150.5px;height:0;line-height:0;font-size:11.5px;color:#7f7f7f;font-weight:bold;white-space:nowrap;'>Bereich</div><div style='position:absolute;left:282.5px;width:600px;text-align:center;top:150.5px;height:0;line-height:0;font-size:11.5px;color:#7f7f7f;font-weight:bold;white-space:nowrap;'>Typ</div><div style='position:absolute;left:332.5px;width:600px;text-align:center;top:150.5px;height:0;line-height:0;font-size:11.5px;color:#7f7f7f;font-weight:bold;white-space:nowrap;'>#</div><div style='position:absolute;left:388.5px;width:600px;text-align:center;top:150.5px;height:0;line-height:0;font-size:11.5px;color:#7f7f7f;font-weight:bold;white-space:nowrap;'>Vorgang</div><div style='position:absolute;left:465.5px;width:600px;text-align:center;top:150.5px;height:0;line-height:0;font-size:11.5px;color:#000;font-weight:bold;white-space:nowrap;text-decoration:underline;'>Auftrag</div><div style='position:absolute;left:527.5px;width:600px;text-align:center;top:150.5px;height:0;line-height:0;font-size:11.5px;color:#7f7f7f;font-weight:bold;white-space:nowrap;text-decoration:underline;'>Beleg</div><div style='position:absolute;left:640.5px;width:600px;text-align:center;top:150.5px;height:0;line-height:0;font-size:11.5px;color:#000;font-weight:bold;white-space:nowrap;'>Kurztext</div><div style='position:absolute;left:750.5px;width:600px;text-align:center;top:150.5px;height:0;line-height:0;font-size:11.5px;color:#7f7f7f;font-weight:bold;white-space:nowrap;text-decoration:underline;'>Adresse</div><div style='position:absolute;left:812.5px;width:600px;text-align:center;top:150.5px;height:0;line-height:0;font-size:11.5px;color:#7f7f7f;font-weight:bold;white-space:nowrap;'>Anrede</div><div style='position:absolute;left:910.5px;width:600px;text-align:center;top:150.5px;height:0;line-height:0;font-size:11.5px;color:#7f7f7f;font-weight:bold;white-space:nowrap;'>Name</div><div style='position:absolute;left:397px;top:167px;width:57px;height:14px;background:#0078d7'></div><div style='position:absolute;left:397px;top:174px;height:0;line-height:0;font-size:10.9px;color:#fff;font-weight:normal;white-space:nowrap;'>2019.00001</div><div style='position:absolute;left:454px;top:167px;width:1.5px;height:14px;background:#f08030'></div><div style='position:absolute;left:282.5px;width:600px;text-align:center;top:174px;height:0;line-height:0;font-size:10.9px;color:#000;font-weight:normal;white-space:nowrap;'>Projektakte</div><div style='position:absolute;left:332.5px;width:600px;text-align:center;top:174px;height:0;line-height:0;font-size:10.9px;color:#000;font-weight:normal;white-space:nowrap;'>1</div><div style='position:absolute;left:645px;top:174px;height:0;line-height:0;font-size:10.9px;color:#000;font-weight:normal;white-space:nowrap;'>Auftrag</div><div style='position:absolute;left:737px;top:174px;height:0;line-height:0;font-size:10.9px;color:#2e7d00;font-weight:normal;white-space:nowrap;'>AB1900001</div><div style='position:absolute;left:799px;top:174px;height:0;line-height:0;font-size:10.9px;color:#2e7d00;font-weight:normal;white-space:nowrap;'>AB1900001</div><div style='position:absolute;left:861px;top:174px;height:0;line-height:0;font-size:10.9px;color:#000;font-weight:normal;white-space:nowrap;'>Renovierungsarbeiten</div><div style='position:absolute;left:1025px;top:174px;height:0;line-height:0;font-size:10.9px;color:#2e7d00;font-weight:normal;white-space:nowrap;'>adler</div><div style='position:absolute;left:1081px;top:174px;height:0;line-height:0;font-size:10.9px;color:#000;font-weight:normal;white-space:nowrap;'>Firma</div><div style='position:absolute;left:1149px;top:174px;height:0;line-height:0;font-size:10.9px;color:#000;font-weight:normal;white-space:nowrap;'>Anja Adler AG</div><div style='position:absolute;left:397px;top:190px;height:0;line-height:0;font-size:10.9px;color:#2e7d00;font-weight:normal;white-space:nowrap;'>2019.00002</div><div style='position:absolute;left:282.5px;width:600px;text-align:center;top:190px;height:0;line-height:0;font-size:10.9px;color:#000;font-weight:normal;white-space:nowrap;'>Projektakte</div><div style='position:absolute;left:332.5px;width:600px;text-align:center;top:190px;height:0;line-height:0;font-size:10.9px;color:#000;font-weight:normal;white-space:nowrap;'>1</div><div style='position:absolute;left:645px;top:190px;height:0;line-height:0;font-size:10.9px;color:#000;font-weight:normal;white-space:nowrap;'>Rechnung</div><div style='position:absolute;left:737px;top:190px;height:0;line-height:0;font-size:10.9px;color:#2e7d00;font-weight:normal;white-space:nowrap;'>AB1900002</div><div style='position:absolute;left:799px;top:190px;height:0;line-height:0;font-size:10.9px;color:#2e7d00;font-weight:normal;white-space:nowrap;'>201900003</div><div style='position:absolute;left:861px;top:190px;height:0;line-height:0;font-size:10.9px;color:#000;font-weight:normal;white-space:nowrap;'>Materialverkauf</div><div style='position:absolute;left:1025px;top:190px;height:0;line-height:0;font-size:10.9px;color:#2e7d00;font-weight:normal;white-space:nowrap;'>rotkopf</div><div style='position:absolute;left:1081px;top:190px;height:0;line-height:0;font-size:10.9px;color:#000;font-weight:normal;white-space:nowrap;'>Firma</div><div style='position:absolute;left:1149px;top:190px;height:0;line-height:0;font-size:10.9px;color:#000;font-weight:normal;white-space:nowrap;'>Rita Rotkopf GmbH</div><div style='position:absolute;left:397px;top:206px;height:0;line-height:0;font-size:10.9px;color:#2e7d00;font-weight:normal;white-space:nowrap;'>2019.00003</div><div style='position:absolute;left:282.5px;width:600px;text-align:center;top:206px;height:0;line-height:0;font-size:10.9px;color:#000;font-weight:normal;white-space:nowrap;'>Projektakte</div><div style='position:absolute;left:332.5px;width:600px;text-align:center;top:206px;height:0;line-height:0;font-size:10.9px;color:#000;font-weight:normal;white-space:nowrap;'>1</div><div style='position:absolute;left:645px;top:206px;height:0;line-height:0;font-size:10.9px;color:#000;font-weight:normal;white-space:nowrap;'>Auftrag</div><div style='position:absolute;left:737px;top:206px;height:0;line-height:0;font-size:10.9px;color:#2e7d00;font-weight:normal;white-space:nowrap;'>AB1900003</div><div style='position:absolute;left:799px;top:206px;height:0;line-height:0;font-size:10.9px;color:#2e7d00;font-weight:normal;white-space:nowrap;'>AB1900003</div><div style='position:absolute;left:861px;top:206px;height:0;line-height:0;font-size:10.9px;color:#000;font-weight:normal;white-space:nowrap;'>Fassadenreinigung</div><div style='position:absolute;left:1025px;top:206px;height:0;line-height:0;font-size:10.9px;color:#2e7d00;font-weight:normal;white-space:nowrap;'>berger</div><div style='position:absolute;left:1081px;top:206px;height:0;line-height:0;font-size:10.9px;color:#000;font-weight:normal;white-space:nowrap;'>Herr</div><div style='position:absolute;left:1149px;top:206px;height:0;line-height:0;font-size:10.9px;color:#000;font-weight:normal;white-space:nowrap;'>Bernd Berger</div><div style='position:absolute;left:397px;top:222px;height:0;line-height:0;font-size:10.9px;color:#2e7d00;font-weight:normal;white-space:nowrap;'>2019.00004</div><div style='position:absolute;left:282.5px;width:600px;text-align:center;top:222px;height:0;line-height:0;font-size:10.9px;color:#000;font-weight:normal;white-space:nowrap;'>Projektakte</div><div style='position:absolute;left:332.5px;width:600px;text-align:center;top:222px;height:0;line-height:0;font-size:10.9px;color:#000;font-weight:normal;white-space:nowrap;'>1</div><div style='position:absolute;left:645px;top:222px;height:0;line-height:0;font-size:10.9px;color:#000;font-weight:normal;white-space:nowrap;'>Auftrag</div><div style='position:absolute;left:737px;top:222px;height:0;line-height:0;font-size:10.9px;color:#2e7d00;font-weight:normal;white-space:nowrap;'>AB1900004</div><div style='position:absolute;left:799px;top:222px;height:0;line-height:0;font-size:10.9px;color:#2e7d00;font-weight:normal;white-space:nowrap;'>AB1900004</div><div style='position:absolute;left:861px;top:222px;height:0;line-height:0;font-size:10.9px;color:#000;font-weight:normal;white-space:nowrap;'>Aufbau Produktionshalle</div><div style='position:absolute;left:1025px;top:222px;height:0;line-height:0;font-size:10.9px;color:#2e7d00;font-weight:normal;white-space:nowrap;'>thelen</div><div style='position:absolute;left:1081px;top:222px;height:0;line-height:0;font-size:10.9px;color:#000;font-weight:normal;white-space:nowrap;'>Firma</div><div style='position:absolute;left:1149px;top:222px;height:0;line-height:0;font-size:10.9px;color:#000;font-weight:normal;white-space:nowrap;'>Tanja Thelen &amp; Co.</div><div style='position:absolute;left:397px;top:238px;height:0;line-height:0;font-size:10.9px;color:#2e7d00;font-weight:normal;white-space:nowrap;'>2019.00004</div><div style='position:absolute;left:282.5px;width:600px;text-align:center;top:238px;height:0;line-height:0;font-size:10.9px;color:#000;font-weight:normal;white-space:nowrap;'>Projektakte</div><div style='position:absolute;left:332.5px;width:600px;text-align:center;top:238px;height:0;line-height:0;font-size:10.9px;color:#000;font-weight:normal;white-space:nowrap;'>2</div><div style='position:absolute;left:645px;top:238px;height:0;line-height:0;font-size:10.9px;color:#000;font-weight:normal;white-space:nowrap;'>Auftrag</div><div style='position:absolute;left:737px;top:238px;height:0;line-height:0;font-size:10.9px;color:#2e7d00;font-weight:normal;white-space:nowrap;'>AB1900005</div><div style='position:absolute;left:799px;top:238px;height:0;line-height:0;font-size:10.9px;color:#2e7d00;font-weight:normal;white-space:nowrap;'>AB1900005</div><div style='position:absolute;left:861px;top:238px;height:0;line-height:0;font-size:10.9px;color:#000;font-weight:normal;white-space:nowrap;'>Aufbau Lagerhalle</div><div style='position:absolute;left:1025px;top:238px;height:0;line-height:0;font-size:10.9px;color:#2e7d00;font-weight:normal;white-space:nowrap;'>thelen</div><div style='position:absolute;left:1081px;top:238px;height:0;line-height:0;font-size:10.9px;color:#000;font-weight:normal;white-space:nowrap;'>Firma</div><div style='position:absolute;left:1149px;top:238px;height:0;line-height:0;font-size:10.9px;color:#000;font-weight:normal;white-space:nowrap;'>Tanja Thelen &amp; Co.</div><div style='position:absolute;left:397px;top:254px;height:0;line-height:0;font-size:10.9px;color:#2e7d00;font-weight:normal;white-space:nowrap;'>2019.00004</div><div style='position:absolute;left:282.5px;width:600px;text-align:center;top:254px;height:0;line-height:0;font-size:10.9px;color:#000;font-weight:normal;white-space:nowrap;'>Projektakte</div><div style='position:absolute;left:332.5px;width:600px;text-align:center;top:254px;height:0;line-height:0;font-size:10.9px;color:#000;font-weight:normal;white-space:nowrap;'>3</div><div style='position:absolute;left:645px;top:254px;height:0;line-height:0;font-size:10.9px;color:#000;font-weight:normal;white-space:nowrap;'>Auftrag</div><div style='position:absolute;left:737px;top:254px;height:0;line-height:0;font-size:10.9px;color:#2e7d00;font-weight:normal;white-space:nowrap;'>AB1900006</div><div style='position:absolute;left:799px;top:254px;height:0;line-height:0;font-size:10.9px;color:#2e7d00;font-weight:normal;white-space:nowrap;'>AB1900006</div><div style='position:absolute;left:861px;top:254px;height:0;line-height:0;font-size:10.9px;color:#000;font-weight:normal;white-space:nowrap;'>Aufbau Pförtnerloge</div><div style='position:absolute;left:1025px;top:254px;height:0;line-height:0;font-size:10.9px;color:#2e7d00;font-weight:normal;white-space:nowrap;'>thelen</div><div style='position:absolute;left:1081px;top:254px;height:0;line-height:0;font-size:10.9px;color:#000;font-weight:normal;white-space:nowrap;'>Firma</div><div style='position:absolute;left:1149px;top:254px;height:0;line-height:0;font-size:10.9px;color:#000;font-weight:normal;white-space:nowrap;'>Tanja Thelen &amp; Co.</div><div style='position:absolute;left:397px;top:270px;height:0;line-height:0;font-size:10.9px;color:#2e7d00;font-weight:normal;white-space:nowrap;'>2019.00005</div><div style='position:absolute;left:282.5px;width:600px;text-align:center;top:270px;height:0;line-height:0;font-size:10.9px;color:#000;font-weight:normal;white-space:nowrap;'>Projektakte</div><div style='position:absolute;left:332.5px;width:600px;text-align:center;top:270px;height:0;line-height:0;font-size:10.9px;color:#000;font-weight:normal;white-space:nowrap;'>1</div><div style='position:absolute;left:645px;top:270px;height:0;line-height:0;font-size:10.9px;color:#000;font-weight:normal;white-space:nowrap;'>Auftrag</div><div style='position:absolute;left:737px;top:270px;height:0;line-height:0;font-size:10.9px;color:#2e7d00;font-weight:normal;white-space:nowrap;'>AB1900007</div><div style='position:absolute;left:799px;top:270px;height:0;line-height:0;font-size:10.9px;color:#2e7d00;font-weight:normal;white-space:nowrap;'>AB1900007</div><div style='position:absolute;left:861px;top:270px;height:0;line-height:0;font-size:10.9px;color:#000;font-weight:normal;white-space:nowrap;'>Erweiterungsbau Bürogebäude</div><div style='position:absolute;left:1025px;top:270px;height:0;line-height:0;font-size:10.9px;color:#2e7d00;font-weight:normal;white-space:nowrap;'>adler</div><div style='position:absolute;left:1081px;top:270px;height:0;line-height:0;font-size:10.9px;color:#000;font-weight:normal;white-space:nowrap;'>Firma</div><div style='position:absolute;left:1149px;top:270px;height:0;line-height:0;font-size:10.9px;color:#000;font-weight:normal;white-space:nowrap;'>Anja Adler AG</div><div style='position:absolute;left:397px;top:286px;height:0;line-height:0;font-size:10.9px;color:#2e7d00;font-weight:normal;white-space:nowrap;'>2019.00009</div><div style='position:absolute;left:282.5px;width:600px;text-align:center;top:286px;height:0;line-height:0;font-size:10.9px;color:#000;font-weight:normal;white-space:nowrap;'>Serviceordner</div><div style='position:absolute;left:332.5px;width:600px;text-align:center;top:286px;height:0;line-height:0;font-size:10.9px;color:#000;font-weight:normal;white-space:nowrap;'>1</div><div style='position:absolute;left:645px;top:286px;height:0;line-height:0;font-size:10.9px;color:#000;font-weight:normal;white-space:nowrap;'>Wartungsvertrag</div><div style='position:absolute;left:737px;top:286px;height:0;line-height:0;font-size:10.9px;color:#2e7d00;font-weight:normal;white-space:nowrap;'>AB1900010</div><div style='position:absolute;left:799px;top:286px;height:0;line-height:0;font-size:10.9px;color:#2e7d00;font-weight:normal;white-space:nowrap;'>WV190000</div><div style='position:absolute;left:861px;top:286px;height:0;line-height:0;font-size:10.9px;color:#000;font-weight:normal;white-space:nowrap;'>Beispiel einer Gasheizung</div><div style='position:absolute;left:1025px;top:286px;height:0;line-height:0;font-size:10.9px;color:#2e7d00;font-weight:normal;white-space:nowrap;'>berger</div><div style='position:absolute;left:1081px;top:286px;height:0;line-height:0;font-size:10.9px;color:#000;font-weight:normal;white-space:nowrap;'>Herr</div><div style='position:absolute;left:1149px;top:286px;height:0;line-height:0;font-size:10.9px;color:#000;font-weight:normal;white-space:nowrap;'>Bernd Berger</div><div style='position:absolute;left:397px;top:302px;height:0;line-height:0;font-size:10.9px;color:#2e7d00;font-weight:normal;white-space:nowrap;'>2019.00022</div><div style='position:absolute;left:282.5px;width:600px;text-align:center;top:302px;height:0;line-height:0;font-size:10.9px;color:#000;font-weight:normal;white-space:nowrap;'>Projektakte</div><div style='position:absolute;left:332.5px;width:600px;text-align:center;top:302px;height:0;line-height:0;font-size:10.9px;color:#000;font-weight:normal;white-space:nowrap;'>1</div><div style='position:absolute;left:645px;top:302px;height:0;line-height:0;font-size:10.9px;color:#000;font-weight:normal;white-space:nowrap;'>Auftrag</div><div style='position:absolute;left:737px;top:302px;height:0;line-height:0;font-size:10.9px;color:#2e7d00;font-weight:normal;white-space:nowrap;'>AB1900014</div><div style='position:absolute;left:799px;top:302px;height:0;line-height:0;font-size:10.9px;color:#2e7d00;font-weight:normal;white-space:nowrap;'>AB1900014</div><div style='position:absolute;left:861px;top:302px;height:0;line-height:0;font-size:10.9px;color:#000;font-weight:normal;white-space:nowrap;'>Einfahrt pflastern</div><div style='position:absolute;left:1025px;top:302px;height:0;line-height:0;font-size:10.9px;color:#2e7d00;font-weight:normal;white-space:nowrap;'>rotkopf</div><div style='position:absolute;left:1081px;top:302px;height:0;line-height:0;font-size:10.9px;color:#000;font-weight:normal;white-space:nowrap;'>Firma</div><div style='position:absolute;left:1149px;top:302px;height:0;line-height:0;font-size:10.9px;color:#000;font-weight:normal;white-space:nowrap;'>Rita Rotkopf GmbH</div><div style='position:absolute;left:397px;top:318px;height:0;line-height:0;font-size:10.9px;color:#2e7d00;font-weight:normal;white-space:nowrap;'>2019.00024</div><div style='position:absolute;left:282.5px;width:600px;text-align:center;top:318px;height:0;line-height:0;font-size:10.9px;color:#000;font-weight:normal;white-space:nowrap;'>Ordner</div><div style='position:absolute;left:332.5px;width:600px;text-align:center;top:318px;height:0;line-height:0;font-size:10.9px;color:#000;font-weight:normal;white-space:nowrap;'>1</div><div style='position:absolute;left:645px;top:318px;height:0;line-height:0;font-size:10.9px;color:#000;font-weight:normal;white-space:nowrap;'>Auftrag</div><div style='position:absolute;left:737px;top:318px;height:0;line-height:0;font-size:10.9px;color:#2e7d00;font-weight:normal;white-space:nowrap;'>AB1900015</div><div style='position:absolute;left:799px;top:318px;height:0;line-height:0;font-size:10.9px;color:#2e7d00;font-weight:normal;white-space:nowrap;'>AB1900015</div><div style='position:absolute;left:861px;top:318px;height:0;line-height:0;font-size:10.9px;color:#000;font-weight:normal;white-space:nowrap;'>Einfahrt pflastern</div><div style='position:absolute;left:1025px;top:318px;height:0;line-height:0;font-size:10.9px;color:#2e7d00;font-weight:normal;white-space:nowrap;'>rotkopf</div><div style='position:absolute;left:1081px;top:318px;height:0;line-height:0;font-size:10.9px;color:#000;font-weight:normal;white-space:nowrap;'>Firma</div><div style='position:absolute;left:1149px;top:318px;height:0;line-height:0;font-size:10.9px;color:#000;font-weight:normal;white-space:nowrap;'>Rita Rotkopf GmbH</div><div style='position:absolute;left:397px;top:334px;height:0;line-height:0;font-size:10.9px;color:#2e7d00;font-weight:normal;white-space:nowrap;'>2019.00025</div><div style='position:absolute;left:282.5px;width:600px;text-align:center;top:334px;height:0;line-height:0;font-size:10.9px;color:#000;font-weight:normal;white-space:nowrap;'>Ordner</div><div style='position:absolute;left:332.5px;width:600px;text-align:center;top:334px;height:0;line-height:0;font-size:10.9px;color:#000;font-weight:normal;white-space:nowrap;'>1</div><div style='position:absolute;left:645px;top:334px;height:0;line-height:0;font-size:10.9px;color:#000;font-weight:normal;white-space:nowrap;'>Arbeitszettel</div><div style='position:absolute;left:737px;top:334px;height:0;line-height:0;font-size:10.9px;color:#2e7d00;font-weight:normal;white-space:nowrap;'>AB1900016</div><div style='position:absolute;left:799px;top:334px;height:0;line-height:0;font-size:10.9px;color:#2e7d00;font-weight:normal;white-space:nowrap;'>AZ1900007</div><div style='position:absolute;left:861px;top:334px;height:0;line-height:0;font-size:10.9px;color:#000;font-weight:normal;white-space:nowrap;'>Einfahrt pflastern</div><div style='position:absolute;left:1025px;top:334px;height:0;line-height:0;font-size:10.9px;color:#2e7d00;font-weight:normal;white-space:nowrap;'>rotkopf</div><div style='position:absolute;left:1081px;top:334px;height:0;line-height:0;font-size:10.9px;color:#000;font-weight:normal;white-space:nowrap;'>Firma</div><div style='position:absolute;left:1149px;top:334px;height:0;line-height:0;font-size:10.9px;color:#000;font-weight:normal;white-space:nowrap;'>Rita Rotkopf GmbH</div><div style='position:absolute;left:1275px;top:166px;width:4px;height:200px;overflow:hidden'><div style='position:absolute;left:2px;top:8px;height:0;line-height:0;font-size:10.9px;color:#000;font-weight:normal;white-space:nowrap;'>W</div><div style='position:absolute;left:2px;top:24px;height:0;line-height:0;font-size:10.9px;color:#000;font-weight:normal;white-space:nowrap;'>T</div><div style='position:absolute;left:2px;top:56px;height:0;line-height:0;font-size:10.9px;color:#000;font-weight:normal;white-space:nowrap;'>B</div><div style='position:absolute;left:2px;top:72px;height:0;line-height:0;font-size:10.9px;color:#000;font-weight:normal;white-space:nowrap;'>B</div><div style='position:absolute;left:2px;top:88px;height:0;line-height:0;font-size:10.9px;color:#000;font-weight:normal;white-space:nowrap;'>B</div><div style='position:absolute;left:2px;top:104px;height:0;line-height:0;font-size:10.9px;color:#000;font-weight:normal;white-space:nowrap;'>W</div><div style='position:absolute;left:2px;top:136px;height:0;line-height:0;font-size:10.9px;color:#000;font-weight:normal;white-space:nowrap;'>T</div><div style='position:absolute;left:2px;top:152px;height:0;line-height:0;font-size:10.9px;color:#000;font-weight:normal;white-space:nowrap;'>T</div><div style='position:absolute;left:2px;top:168px;height:0;line-height:0;font-size:10.9px;color:#000;font-weight:normal;white-space:nowrap;'>T</div></div><svg style='left:383px;top:168px' width='8' height='13'><path d='M0.8 0.8L7 6.4L0.8 12Z' fill='#000'/></svg><div style='position:absolute;left:377px;top:709px;width:902px;height:17px;background:repeating-conic-gradient(#f4f4f4 0 25%,#fdfdfd 0 50%) 0 0/2px 2px'></div><div style='position:absolute;left:378px;top:709px;width:17px;height:17px;background:#f0f0f0;border:1px solid #a0a0a0;box-shadow:inset 1px 1px 0 #fff'></div><svg style='left:382px;top:714px' width='6' height='8'><path d='M5 0.2V7.6L0.8 3.9Z' fill='#000'/></svg><div style='position:absolute;left:394px;top:709px;width:11px;height:17px;background:#f0f0f0;border:1px solid #a0a0a0;box-shadow:inset 1px 1px 0 #fff'></div><div style='position:absolute;left:1262px;top:709px;width:17px;height:17px;background:#f0f0f0;border:1px solid #a0a0a0;box-shadow:inset 1px 1px 0 #fff'></div><svg style='left:1267px;top:714px' width='6' height='8'><path d='M0.8 0.2V7.6L5 3.9Z' fill='#000'/></svg><div style='position:absolute;left:377px;top:726px;width:902px;height:19px;background:#f0f0f0;border-top:1px solid #a0a0a0;border-bottom:1px solid #a0a0a0'></div><div style='position:absolute;left:378px;top:727px;width:18px;height:17px;background:#f0f0f0;border:1px solid #fff;border-right-color:#808080;border-bottom-color:#808080'></div><svg style='left:383px;top:730px' width='10' height='11'><path d='M0.8 0.5H2.8V10.5H0.8Z' fill='#000'/><path d='M9 0.5V10.5L3.5 5.5Z' fill='#000'/></svg><div style='position:absolute;left:397px;top:727px;width:18px;height:17px;background:#f0f0f0;border:1px solid #fff;border-right-color:#808080;border-bottom-color:#808080'></div><svg style='left:403px;top:730px' width='10' height='12'><path d='M6.2 0.2V11L-0.2 5.6Z' fill='#000'/></svg><div style='position:absolute;left:415px;top:727px;width:1px;height:17px;background:#a0a0a0'></div><div style='position:absolute;left:420px;top:736px;height:0;line-height:0;font-size:10.6px;color:#000;font-weight:normal;white-space:nowrap;'>SQL TOP 1000 Datensatz 1 von 11 gelesenen</div><div style='position:absolute;left:377px;top:709px;width:1px;height:36px;background:#a49c88'></div><div style='position:absolute;left:1279px;top:136px;width:1px;height:609px;background:#a49c88'></div><div style='position:absolute;left:1241px;top:727px;width:1px;height:17px;background:#a0a0a0'></div><div style='position:absolute;left:1242px;top:727px;width:18px;height:17px;background:#f0f0f0;border:1px solid #fff;border-right-color:#808080;border-bottom-color:#808080'></div><svg style='left:1247px;top:730px' width='10' height='12'><path d='M0.8 0.2V11L7 5.6Z' fill='#000'/></svg><div style='position:absolute;left:1261px;top:727px;width:18px;height:17px;background:#f0f0f0;border:1px solid #fff;border-right-color:#808080;border-bottom-color:#808080'></div><svg style='left:1265px;top:730px' width='10' height='11'><path d='M0.8 0.5V10.5L6.3 5.5Z' fill='#000'/><path d='M7 0.5H9V10.5H7Z' fill='#000'/></svg><div style='position:absolute;left:0px;top:751px;width:1280px;height:19px;background:#f0f0f0'></div><div style='position:absolute;left:0px;top:751px;width:888px;height:18px;border-top:1px solid #a0a0a0;border-left:1px solid #a0a0a0;border-right:1px solid #fff;border-bottom:1px solid #fff'></div><div style='position:absolute;left:890px;top:751px;width:39px;height:18px;border-top:1px solid #a0a0a0;border-left:1px solid #a0a0a0;border-right:1px solid #fff;border-bottom:1px solid #fff'></div><div style='position:absolute;left:931px;top:751px;width:39px;height:18px;border-top:1px solid #a0a0a0;border-left:1px solid #a0a0a0;border-right:1px solid #fff;border-bottom:1px solid #fff'></div><div style='position:absolute;left:972px;top:751px;width:39px;height:18px;border-top:1px solid #a0a0a0;border-left:1px solid #a0a0a0;border-right:1px solid #fff;border-bottom:1px solid #fff'></div><div style='position:absolute;left:1013px;top:751px;width:39px;height:18px;border-top:1px solid #a0a0a0;border-left:1px solid #a0a0a0;border-right:1px solid #fff;border-bottom:1px solid #fff'></div><div style='position:absolute;left:1054px;top:751px;width:207px;height:18px;border-top:1px solid #a0a0a0;border-left:1px solid #a0a0a0;border-right:1px solid #fff;border-bottom:1px solid #fff'></div><div style='position:absolute;left:1061px;top:760.3px;height:0;line-height:0;font-size:12.2px;color:#000;font-weight:normal;white-space:nowrap;'>admin - Moser-Dokumentation.mdb</div></body></html>
